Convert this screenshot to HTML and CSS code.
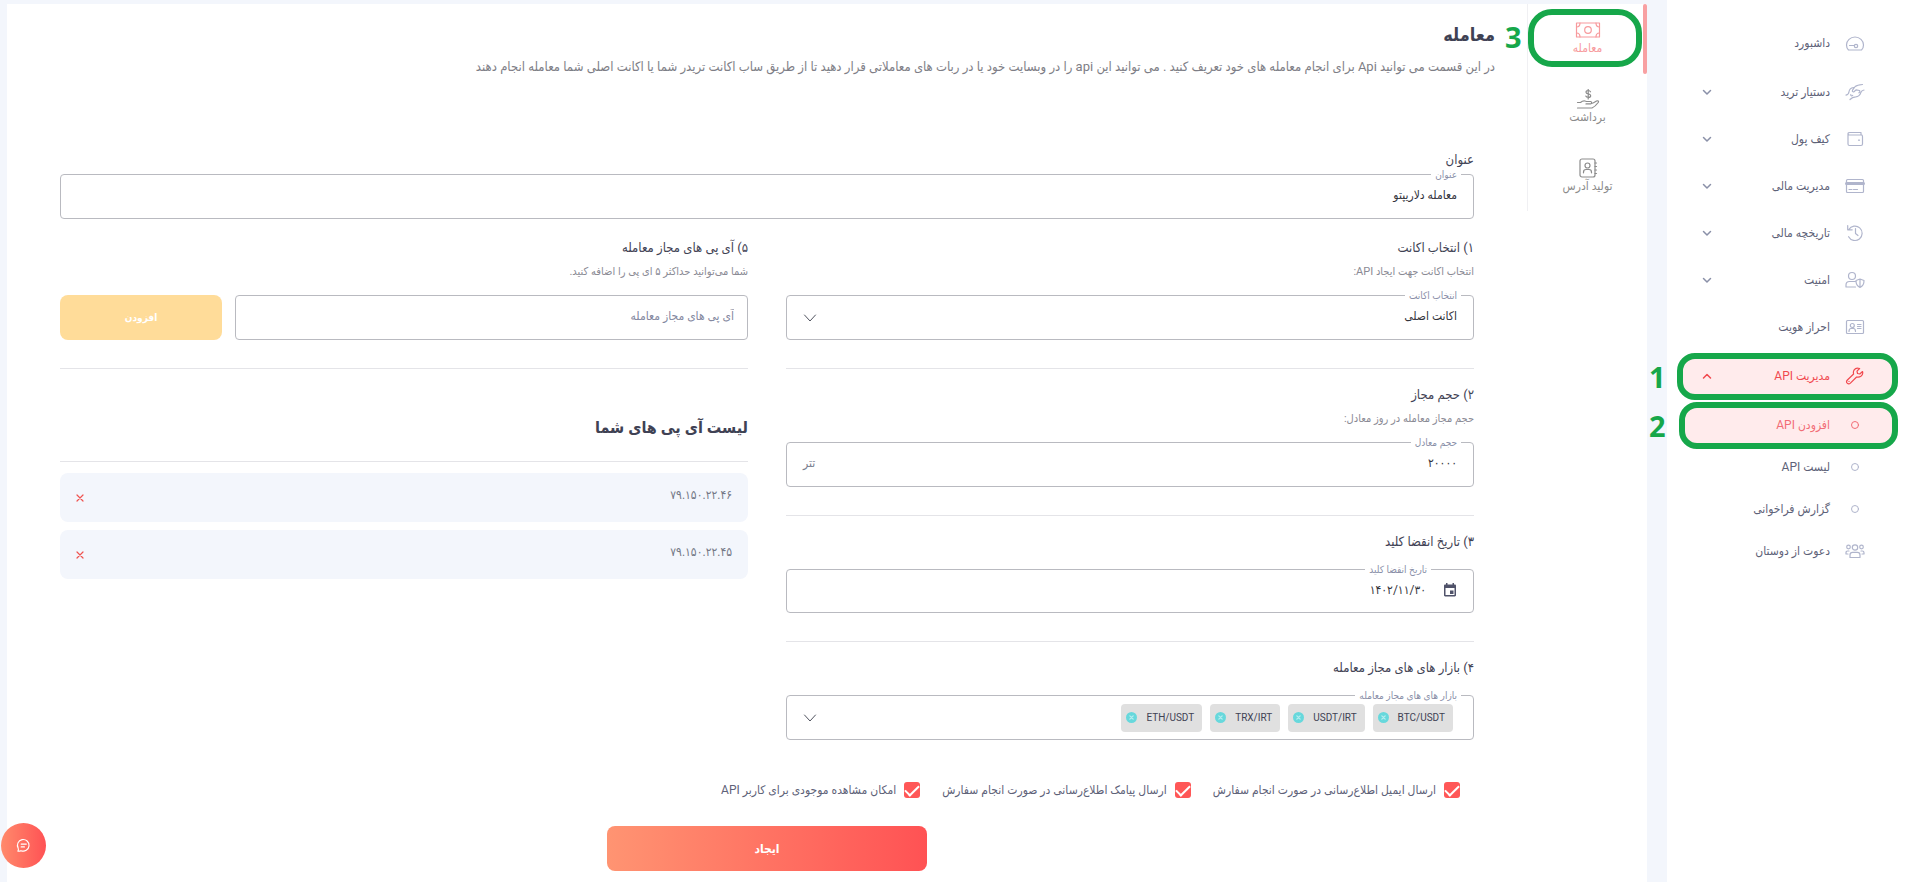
FILE: index.html
```html
<!DOCTYPE html>
<html lang="fa" dir="rtl">
<head>
    <meta charset="UTF-8">
    <meta name="viewport" content="width=device-width, initial-scale=1.0">
    <title>افزودن API</title>
    <link rel="stylesheet" href="styles.css">
</head>
<body>
    <div class="layout">
        <nav class="sidebar">
            <ul class="menu">
                <li class="menu-first">
                    <a class="menu-link" href="#">
                        <svg class="menu-icon" viewBox="0 0 20 20"><path d="M3.500 17C2 15.500 1.500 13.500 1.500 12a8.500 8 0 0 1 17 0c0 2-.5 3.700-2 5zM4.500 12.500h4.800"/><circle cx="11" cy="13" r="1.700"/></svg>
                        <span class="menu-text">داشبورد</span>
                    </a>
                </li>
                <li>
                    <a class="menu-link" href="#">
                        <svg class="menu-icon" viewBox="0 0 20 20"><path d="M17.500 2.500c-3 .2-5.500.6-7.300 2L7.500 8.200c-.7 1.200.6 2.200 1.800 1.300l1.700-1.700 3.500.7c.8.800.2 2-.6 2.300M1 13.200c2-.5 2.800-1.700 3-3.400C4.300 7.500 6 5.800 8.500 5.500M19 8c-2 .2-2.700 1-3.200 2.700-.8 2.600-2.500 4-5.100 4.200-2.400.1-4 .8-5.700 2.600M5.800 12.500c-.3 1.300.8 1.800 1.900.9"/></svg>
                        <span class="menu-text">دستیار ترید</span>
                        <svg class="menu-arrow" viewBox="0 0 10 10"><path d="M1.500 3.500 5 7l3.500-3.500"/></svg>
                    </a>
                </li>
                <li>
                    <a class="menu-link" href="#">
                        <svg class="menu-icon" viewBox="0 0 20 20"><path d="M17 6H5C3.700 6 3 5.500 3 4.700S3.700 3.500 5 3.500h11V6M3 4.700V15c0 .9.600 1.500 1.500 1.500H16c.9 0 1.500-.6 1.500-1.500V7.500C17.500 6.600 17.200 6 16.300 6M13.500 11.200h1"/></svg>
                        <span class="menu-text">کیف پول</span>
                        <svg class="menu-arrow" viewBox="0 0 10 10"><path d="M1.500 3.500 5 7l3.500-3.500"/></svg>
                    </a>
                </li>
                <li>
                    <a class="menu-link" href="#">
                        <svg class="menu-icon" viewBox="0 0 20 20"><rect x="1.500" y="3.500" width="17" height="13" rx="1"/><path d="M4 13.500h3M8.500 13.500h4"/><path class="thick" d="M1.500 7.500h17"/></svg>
                        <span class="menu-text">مدیریت مالی</span>
                        <svg class="menu-arrow" viewBox="0 0 10 10"><path d="M1.500 3.500 5 7l3.500-3.500"/></svg>
                    </a>
                </li>
                <li>
                    <a class="menu-link" href="#">
                        <svg class="menu-icon" viewBox="0 0 20 20"><path d="M3.800 6.500a7.200 7.200 0 1 1-.2 7.200M2.700 2.500v4.300h4.500M10.500 5.500v5l2.500 2"/></svg>
                        <span class="menu-text">تاریخچه مالی</span>
                        <svg class="menu-arrow" viewBox="0 0 10 10"><path d="M1.500 3.500 5 7l3.500-3.500"/></svg>
                    </a>
                </li>
                <li>
                    <a class="menu-link" href="#">
                        <svg class="menu-icon" viewBox="0 0 20 20"><circle cx="7" cy="6" r="3.500"/><path d="M10.500 17H1v-2c0-2.200 1.500-3.500 3.500-3.500H10M15 9l4 1.500c.1 3.200-1 5.500-4 7-3-1.500-4.100-3.800-4-7zM15 9v8.500"/></svg>
                        <span class="menu-text">امنیت</span>
                        <svg class="menu-arrow" viewBox="0 0 10 10"><path d="M1.500 3.500 5 7l3.500-3.500"/></svg>
                    </a>
                </li>
                <li>
                    <a class="menu-link" href="#">
                        <svg class="menu-icon" viewBox="0 0 20 20"><rect x="1.500" y="3.500" width="17" height="13" rx="1"/><circle cx="7.300" cy="8.500" r="2"/><path d="M4 14.500c0-2 .8-3 2-3h2.500c1.300 0 2 1 2 3M12.500 7.500h3.500M12.500 9.500h3.500M12.500 11.500h3.500"/></svg>
                        <span class="menu-text">احراز هویت</span>
                    </a>
                </li>
                <li class="marked marked-parent">
                    <a class="menu-link active" href="#">
                        <svg class="menu-icon" viewBox="0 0 20 20"><path d="M17.500 5.500 14.800 8l-2.300-.5L12 5.200l2.600-2.700c-2-.8-4.300-.3-5.400 1.300-.9 1.300-1 2.700-.6 4.200L2.400 14c-1 1-1 2.300-.2 3.200.9.900 2.300.8 3.200-.1l6.200-6.100c1.600.4 3 .2 4.300-.7 1.500-1.100 2.200-3 1.600-4.800z"/><path d="M4 15.300v.2"/></svg>
                        <span class="menu-text">مدیریت API</span>
                        <svg class="menu-arrow" viewBox="0 0 10 10"><path d="M1.500 7 5 3.500 8.500 7"/></svg>
                    </a>
                    <span class="step">1</span>
                </li>
                <li class="marked marked-child">
                    <a class="menu-link active" href="#">
                        <svg class="menu-icon dot" viewBox="0 0 20 20"><circle cx="10" cy="10" r="3.500"/></svg>
                        <span class="menu-text">افزودن API</span>
                    </a>
                    <span class="step">2</span>
                </li>
                <li>
                    <a class="menu-link sub" href="#">
                        <svg class="menu-icon dot" viewBox="0 0 20 20"><circle cx="10" cy="10" r="3.500"/></svg>
                        <span class="menu-text">لیست API</span>
                    </a>
                </li>
                <li>
                    <a class="menu-link sub" href="#">
                        <svg class="menu-icon dot" viewBox="0 0 20 20"><circle cx="10" cy="10" r="3.500"/></svg>
                        <span class="menu-text">گزارش فراخوانی</span>
                    </a>
                </li>
                <li>
                    <a class="menu-link sub" href="#">
                        <svg class="menu-icon" viewBox="0 0 20 20"><circle cx="10" cy="6.500" r="2.700"/><circle cx="3.500" cy="6" r="1.800"/><circle cx="16.500" cy="6" r="1.800"/><path d="M5 16.500V14c0-1.700 1-2.700 2.600-2.700h4.800c1.600 0 2.600 1 2.600 2.700v2.500zM4 10H2.700C1.500 10 1 10.700 1 11.800V13h2M16 10h1.300c1.200 0 1.700.7 1.700 1.800V13h-2"/></svg>
                        <span class="menu-text">دعوت از دوستان</span>
                    </a>
                </li>
            </ul>
        </nav>

        <main class="card">
            <div class="tabs">
                <button type="button" class="tab tab-active">
                    <svg class="tab-icon" viewBox="0 0 26 20"><rect x="1.500" y="3" width="23" height="14"/><circle cx="13" cy="10" r="3.300"/><path d="M1.500 7c2.300 0 3.500-1.500 3.500-4M24.500 7c-2.300 0-3.500-1.500-3.500-4M1.500 13c2.300 0 3.500 1.500 3.500 4M24.500 13c-2.300 0-3.500 1.500-3.500 4"/></svg>
                    معامله
                </button>
                <button type="button" class="tab">
                    <svg class="tab-icon" viewBox="0 0 26 20"><path d="M15.500 2.800C15 1.800 14.200 1.500 13.200 1.500c-1.300 0-2.200.6-2.200 1.700 0 2.500 4.700 1 4.700 3.500 0 1-1 1.700-2.400 1.700-1.200 0-2.100-.4-2.500-1.400M13.200 0v10M2.500 13.500h3c1.500-1.300 3-1.800 4.500-1.500l1.500.5h4c1.500.1 1.500 2.300 0 2.400h-4.500M16.500 14.500c2-.4 3.500-1.500 5-2.500 1.300-.7 2.500.3 1.700 1.500-1.500 2-3.700 4.500-6.200 5.500H2.500"/></svg>
                    برداشت
                </button>
                <button type="button" class="tab">
                    <svg class="tab-icon" viewBox="0 0 26 20"><rect x="5" y="1" width="15" height="18" rx="2"/><circle cx="12.500" cy="7.500" r="2.500"/><path d="M8.500 14.800v-.6c0-1.800 1-2.700 2.500-2.700h3c1.500 0 2.500.9 2.500 2.700v.6M20 5h1.500M20 8.500h1.500M20 12h1.500M20 15.500h1.500"/></svg>
                    تولید آدرس
                </button>
                <span class="step step-tab">3</span>
            </div>

            <div class="content">
                <header class="intro">
                    <h1>معامله</h1>
                    <p>در این قسمت می توانید Api برای انجام معامله های خود تعریف کنید . می توانید این api را در وبسایت خود یا در ربات های معاملاتی قرار دهید تا از طریق ساب اکانت تریدر شما یا اکانت اصلی شما معامله انجام دهند</p>
                </header>

                <form class="api-form" id="api-form" onsubmit="return false">
                    <h2 class="section-title title-first">عنوان</h2>
                    <div class="field">
                        <label for="title">عنوان</label>
                        <input type="text" id="title" value="معامله دلاریپتو">
                    </div>

                    <div class="columns">
                        <div class="column">
                            <section class="group">
                                <h2 class="section-title">۱) انتخاب اکانت</h2>
                                <p class="hint">انتخاب اکانت جهت ایجاد API:</p>
                                <div class="field">
                                    <label for="account">انتخاب اکانت</label>
                                    <select id="account"><option>اکانت اصلی</option></select>
                                    <svg class="caret" viewBox="0 0 14 14"><path d="m1.500 4 5.500 6 5.500-6"/></svg>
                                </div>
                            </section>
                            <section class="group">
                                <h2 class="section-title">۲) حجم مجاز</h2>
                                <p class="hint">حجم مجاز معامله در روز معادل:</p>
                                <div class="field">
                                    <label for="volume">حجم معادل</label>
                                    <input type="text" id="volume" value="۲۰۰۰۰">
                                    <span class="unit">تتر</span>
                                </div>
                            </section>
                            <section class="group">
                                <h2 class="section-title title-only">۳) تاریخ انقضا کلید</h2>
                                <div class="field field-date">
                                    <svg class="calendar" viewBox="0 0 14 14"><path fill-rule="evenodd" d="M3 0h1.500v1.500h5V0H11v1.500h.8c.7 0 1.200.5 1.200 1.200v9.600c0 .7-.5 1.200-1.200 1.200H2.200c-.7 0-1.200-.5-1.200-1.200V2.700c0-.7.5-1.200 1.200-1.200H3zM2.500 5v7h9V5zM7 7.500h3.500V11H7z"/></svg>
                                    <label for="expire">تاریخ انقضا کلید</label>
                                    <input type="text" id="expire" value="۱۴۰۲/۱۱/۳۰">
                                </div>
                            </section>
                            <section class="group group-last">
                                <h2 class="section-title title-only">۴) بازار های های مجاز معامله</h2>
                                <div class="field field-chips" role="group" aria-labelledby="markets">
                                    <span class="field-label" id="markets">بازار های های مجاز معامله</span>
                                    <span class="chip">BTC/USDT<button type="button" aria-label="حذف BTC/USDT"><svg viewBox="0 0 10 10"><path d="m3.500 3.500 3 3M6.500 3.500l-3 3"/></svg></button></span>
                                    <span class="chip">USDT/IRT<button type="button" aria-label="حذف USDT/IRT"><svg viewBox="0 0 10 10"><path d="m3.500 3.500 3 3M6.500 3.500l-3 3"/></svg></button></span>
                                    <span class="chip">TRX/IRT<button type="button" aria-label="حذف TRX/IRT"><svg viewBox="0 0 10 10"><path d="m3.500 3.500 3 3M6.500 3.500l-3 3"/></svg></button></span>
                                    <span class="chip">ETH/USDT<button type="button" aria-label="حذف ETH/USDT"><svg viewBox="0 0 10 10"><path d="m3.500 3.500 3 3M6.500 3.500l-3 3"/></svg></button></span>
                                    <svg class="caret" viewBox="0 0 14 14"><path d="m1.500 4 5.500 6 5.500-6"/></svg>
                                </div>
                            </section>
                        </div>

                        <div class="column">
                            <section class="group">
                                <h2 class="section-title">۵) آی پی های مجاز معامله</h2>
                                <p class="hint">شما می‌توانید حداکثر ۵ ای پی را اضافه کنید.</p>
                                <div class="ip-row">
                                    <div class="field field-ip">
                                        <input type="text" aria-label="آی پی های مجاز معامله" placeholder="آی پی های مجاز معامله">
                                    </div>
                                    <button type="button" class="btn-add">افزودن</button>
                                </div>
                            </section>
                            <h2 class="list-title">لیست آی پی های شما</h2>
                            <ul class="ip-list">
                                <li>
                                    <span>۷۹.۱۵۰.۲۲.۴۶</span>
                                    <button type="button" aria-label="حذف"><svg viewBox="0 0 8 8"><path d="m1 1 6 6M7 1 1 7"/></svg></button>
                                </li>
                                <li>
                                    <span>۷۹.۱۵۰.۲۲.۴۵</span>
                                    <button type="button" aria-label="حذف"><svg viewBox="0 0 8 8"><path d="m1 1 6 6M7 1 1 7"/></svg></button>
                                </li>
                            </ul>
                        </div>
                    </div>

                    <div class="checks">
                        <label><input type="checkbox" checked>ارسال ایمیل اطلاع‌رسانی در صورت انجام سفارش</label>
                        <label><input type="checkbox" checked>ارسال پیامک اطلاع‌رسانی در صورت انجام سفارش</label>
                        <label><input type="checkbox" checked>امکان مشاهده موجودی برای کاربر API</label>
                    </div>
                </form>
            </div>
            <button type="submit" form="api-form" class="btn-create">ایجاد</button>
        </main>
    </div>

    <button type="button" class="chat" aria-label="گفتگو">
        <svg viewBox="0 0 16 16"><path d="M2 14c.8-1 .8-2 .3-3.200a6.200 6.200 0 1 1 3 2.700C4.300 14 3.200 14.200 2 14zM5.500 6.500H11M5.500 9.500h3.500"/></svg>
    </button>
</body>
</html>
```

FILE: styles.css
```css
* {
    box-sizing: border-box;
}
body {
    margin: 0;
    background-color: #f3f6fc;
    font-family: Roboto, "DejaVu Sans Condensed", "DejaVu Sans", sans-serif;
    font-size: 12px;
    line-height: 20px;
    color: #3f4254;
}
h1, h2, p, ul {
    margin: 0;
    padding: 0;
}
ul {
    list-style: none;
}
button, input, select {
    font: inherit;
}
button {
    border: none;
    cursor: pointer;
}
svg {
    fill: none;
    stroke: currentColor;
    stroke-width: 1.2;
    stroke-linecap: round;
    stroke-linejoin: round;
}
.layout {
    display: flex;
    gap: 20px;
    height: 100vh;
    overflow: hidden;
    padding-left: 7px;
}

/* sidebar */
.sidebar {
    flex: 0 0 240px;
    padding-top: 19px;
    background-color: #fff;
}
.menu-first {
    margin-bottom: 2px;
}
.menu-link {
    display: flex;
    align-items: center;
    gap: 15px;
    height: 47px;
    padding: 0 42px 0 35px;
    color: #5e6278;
    text-decoration: none;
}
.menu-icon {
    flex: none;
    width: 20px;
    height: 20px;
    color: #b0b5cc;
}
.menu-icon.dot {
    stroke-width: 1;
}
.menu-icon .thick {
    stroke-width: 3;
}
.menu-text {
    flex: 1;
}
.menu-arrow {
    width: 10px;
    height: 10px;
    color: #8a90a8;
    stroke-width: 1.5;
}
.menu-link.sub {
    height: 42px;
}
.marked {
    position: relative;
    margin: 3px 9px 0 10px;
    border: 6px solid #16a74a;
    border-radius: 18px;
    background-color: #ffebec;
}
.marked-child {
    margin: 2px 9px -3px 12px;
}
.marked .menu-link {
    height: 35px;
    padding: 0 27px 2px 19px;
}
.marked .menu-link.active, .menu-link.active svg {
    color: #f1494f;
}
.marked-child .menu-link.active, .marked-child .menu-link.active svg {
    color: #f26d76;
}
.step {
    position: absolute;
    left: -34px;
    top: 0;
    font-family: "Noto Sans", "Open Sans", sans-serif;
    font-size: 29px;
    font-weight: bold;
    line-height: 36px;
    color: #16a74a;
}
.marked-child .step {
    left: -36px;
}

/* main card */
.card {
    flex: 1;
    display: grid;
    grid-template-columns: 120px minmax(0, 1fr);
    align-content: start;
    margin-top: 4px;
    background-color: #fff;
}
.tabs {
    position: relative;
    align-self: start;
    border-left: 1px solid #f0f0f3;
}
.tab {
    display: flex;
    flex-direction: column;
    align-items: center;
    justify-content: center;
    width: 100%;
    height: 69px;
    padding: 0 0 2px;
    background: none;
    color: #8c8c8c;
    line-height: 16px;
}
.tab-icon {
    width: 26px;
    height: 20px;
}
.tab-active {
    position: relative;
    color: #f79a9d;
}
.tab-active::before {
    content: "";
    position: absolute;
    top: 0;
    right: 0;
    width: 4px;
    height: 70px;
    border-radius: 2px;
    background-color: #f8a0a2;
}
.tab-active::after {
    content: "";
    position: absolute;
    inset: 5px 5px 6px 0;
    border: 6px solid #16a74a;
    border-radius: 24px;
}
.step-tab {
    left: -23px;
    top: 15px;
}
.content {
    padding: 0 32px 0 53px;
}
.intro h1 {
    margin-top: 16px;
    font-size: 18px;
    line-height: 30px;
}
.intro p {
    margin-top: 7px;
    color: #7e7e86;
    font-size: 13px;
    line-height: 20px;
}
.api-form {
    padding: 73px 21px 0 0;
}
.section-title {
    font-size: 13px;
    font-weight: normal;
    line-height: 20px;
}
.title-first {
    margin-bottom: 4px;
}
.hint {
    margin: 4px 0 13px;
    font-size: 11px;
    color: #8a8a94;
}
.title-only {
    margin-bottom: 17px;
}

/* outlined fields */
.field {
    position: relative;
    display: flex;
    align-items: center;
    gap: 8px;
    height: 45px;
    padding: 0 16px;
    border: 1px solid #b9bac0;
    border-radius: 4px;
}
.field label, .field-label {
    position: absolute;
    top: -8px;
    right: 12px;
    padding: 0 4px;
    background-color: #fff;
    font-size: 10px;
    line-height: 16px;
    color: #8a8fa8;
}
.field input, .field select {
    flex: 1;
    min-width: 0;
    height: 40px;
    padding: 0 0 3px;
    border: none;
    outline: none;
    background: none;
    color: #33343c;
    appearance: none;
}
.field input::placeholder {
    color: #8488a0;
    opacity: 1;
}
.field .caret {
    width: 14px;
    height: 14px;
    margin: 0 auto 0 0;
    color: #50535f;
    stroke-width: 1;
    pointer-events: none;
}
.unit {
    padding-bottom: 3px;
    color: #7b8090;
}
.field-date {
    gap: 17px;
    height: 44px;
}
.field-date label {
    right: 42px;
}
.calendar {
    width: 14px;
    height: 14px;
    margin-bottom: 3px;
    fill: #50536a;
    stroke: none;
}
.field-chips {
    padding-right: 20px;
}
.chip {
    display: flex;
    align-items: center;
    gap: 9px;
    height: 28px;
    padding: 0 8px 0 5px;
    border-radius: 4px;
    background-color: #e0e0e0;
    font-size: 10px;
}
.chip button {
    display: flex;
    padding: 0;
    border-radius: 50%;
    background-color: #67d8dc;
    color: #b5edef;
}
.chip svg {
    width: 11px;
    height: 11px;
}
.columns {
    display: grid;
    grid-template-columns: 1fr 1fr;
    gap: 38px;
    margin-top: 19px;
}
.group {
    margin-bottom: 16px;
    padding-bottom: 28px;
    border-bottom: 1px solid #e4e4e8;
}
.group-last {
    margin: 0;
    padding: 0;
    border: none;
}

/* allowed ip list */
.ip-row {
    display: grid;
    grid-template-columns: 1fr 162px;
    gap: 13px;
}
.field-ip {
    padding: 0 13px;
}
.btn-add {
    border-radius: 8px;
    background-color: #ffdc99;
    color: #fff;
    font-weight: bold;
    font-size: 10px;
}
.list-title {
    padding: 28px 0 18px;
    border-bottom: 1px solid #e4e4e8;
    margin-bottom: 11px;
    font-size: 16px;
    line-height: 30px;
}
.ip-list {
    display: grid;
    gap: 8px;
}
.ip-list li {
    display: flex;
    align-items: center;
    justify-content: space-between;
    height: 49px;
    padding: 0 16px;
    border-radius: 8px;
    background-color: #f3f6fc;
    color: #747886;
}
.ip-list span {
    padding-bottom: 5px;
}
.ip-list button {
    display: flex;
    padding: 0;
    background: none;
    color: #ef5350;
}
.ip-list svg {
    width: 8px;
    height: 8px;
}

/* notifications and submit */
.checks {
    display: flex;
    gap: 22px;
    margin-top: 40px;
    padding-right: 14px;
}
.checks label {
    display: flex;
    align-items: center;
    gap: 8px;
    color: #5e6278;
}
.checks input {
    appearance: none;
    width: 16px;
    height: 16px;
    margin: 0;
    border-radius: 3px;
    background-color: #ff5757;
    display: grid;
    place-items: center;
}
.checks input::before {
    content: "";
    width: 12px;
    height: 6px;
    border: solid #fff;
    border-width: 0 0 2px 2px;
    transform: translateY(-1px) rotate(-45deg);
}
.btn-create {
    grid-column: 1 / -1;
    justify-self: center;
    width: 320px;
    height: 45px;
    margin-top: 26px;
    margin-right: 120px;
    border-radius: 8px;
    background: linear-gradient(to left, #ff5254, #ff9472);
    color: #fff;
    font-weight: bold;
}
.chat {
    position: fixed;
    left: 1px;
    bottom: 14px;
    display: grid;
    place-items: center;
    width: 45px;
    height: 45px;
    padding: 0;
    border-radius: 50%;
    background: linear-gradient(to left, #ff5254, #ff8a6c);
    color: #fff;
}
.chat svg {
    width: 15px;
    height: 15px;
}
```
